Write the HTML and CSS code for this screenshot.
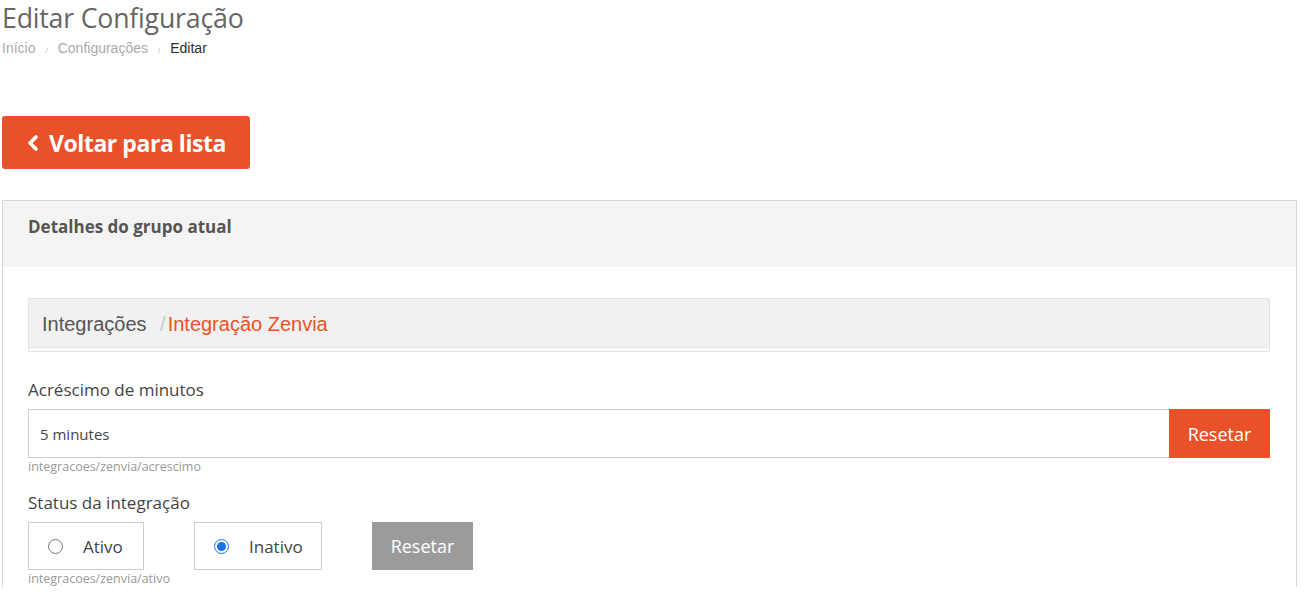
FILE: index.html
```html
<!DOCTYPE html>
<html lang="pt-BR">
<head>
<meta charset="utf-8">
<title>Editar Configuração</title>
<link rel="stylesheet" href="styles.css">
</head>
<body>
<div class="page">
  <h1 class="title">Editar Configuração</h1>
  <ol class="crumbs">
    <li><a href="#">Início</a></li>
    <li class="sep">/</li>
    <li><a href="#">Configurações</a></li>
    <li class="sep">/</li>
    <li class="current">Editar</li>
  </ol>

  <a class="btn-back" href="#">
    <svg class="chev" width="14" height="18" viewBox="0 0 14 18"><polyline points="10,3 4,9 10,15" fill="none" stroke="#fff" stroke-width="3.6" stroke-linecap="round" stroke-linejoin="round"/></svg>
    <span>Voltar para lista</span>
  </a>

  <section class="panel">
    <header class="panel-head">Detalhes do grupo atual</header>
    <div class="panel-body">
      <div class="group-crumb">
        <span class="gc-root">Integrações</span>
        <span class="gc-sep">/</span><span class="gc-active">Integração Zenvia</span>
      </div>

      <div class="field">
        <label class="label">Acréscimo de minutos</label>
        <div class="input-row">
          <input class="text-input" type="text" value="5 minutes">
          <button class="btn-reset">Resetar</button>
        </div>
        <div class="help">integracoes/zenvia/acrescimo</div>
      </div>

      <div class="field">
        <label class="label">Status da integração</label>
        <div class="radio-row">
          <label class="radio-box"><input type="radio" name="ativo"><span>Ativo</span></label>
          <label class="radio-box wide"><input type="radio" name="ativo" checked><span>Inativo</span></label>
          <button class="btn-reset gray">Resetar</button>
        </div>
        <div class="help">integracoes/zenvia/ativo</div>
      </div>
    </div>
  </section>
</div>
</body>
</html>
```

FILE: styles.css
```css
* { box-sizing: border-box; }
html, body { margin: 0; padding: 0; background: #fff; }
body { font-family: "Open Sans", "Noto Sans", sans-serif; color: #555; overflow: hidden; }

.page { padding: 0 13px 0 2px; }

.title {
  margin: 0;
  padding-top: 1px;
  font-weight: 400;
  font-size: 26.7px;
  line-height: 34px;
  color: #666;
  letter-spacing: -0.2px;
}

.crumbs {
  list-style: none;
  margin: 3px 0 0;
  padding: 0;
  display: flex;
  align-items: baseline;
  font-family: "Liberation Sans", Arial, sans-serif;
  font-size: 14px;
  line-height: 20px;
}
.crumbs a { color: #aaa; text-decoration: none; }
.crumbs .sep { color: #bbb; font-size: 8px; padding: 0 10px; }
.crumbs .current { color: #2b2b2b; }

.btn-back {
  display: inline-flex;
  align-items: center;
  gap: 9px;
  margin-top: 55px;
  height: 53px;
  width: 248px;
  padding-left: 24px;
  background: #e95228;
  border-radius: 3px;
  color: #fff;
  text-decoration: none;
  font-weight: 700;
  font-size: 23px;
  letter-spacing: -0.45px;
}
.chev { display: block; margin-top: 1px; }

.panel {
  margin-top: 31px;
  border: 1px solid #d6d6d6;
  border-bottom: 0;
}
.panel-head {
  background: #f4f4f4;
  height: 66px;
  padding: 15px 25px 0;
  font-weight: 700;
  font-size: 17px;
  line-height: 22px;
  color: #555;
}
.panel-body { padding: 31px 26px 0 25px; }

.group-crumb {
  background: #f1f1f1;
  border: 1px solid #e4e4e4;
  height: 54px;
  padding: 12px 13px 0;
  font-family: "Liberation Sans", Arial, sans-serif;
  font-size: 20px;
  line-height: 26px;
  box-shadow: inset 0 -3px 0 #fff, inset 0 -4px 0 #e4e4e4;
}
.gc-root { color: #555; }
.gc-sep { color: #c8c8c8; padding: 0 2px 0 8px; }
.gc-active { color: #e9532a; }

.field { margin-top: 27px; }
.field + .field { margin-top: 17px; }

.label {
  display: block;
  font-size: 17px;
  line-height: 21px;
  color: #444;
  margin-bottom: 9px;
}

.input-row { display: flex; height: 49px; }
.text-input {
  flex: 1;
  border: 1px solid #ccc;
  border-right: 0;
  padding: 0 11px;
  font-family: "Open Sans", "Noto Sans", sans-serif;
  font-size: 15px;
  color: #444;
  outline: none;
  background: #fff;
}

.btn-reset {
  width: 101px;
  border: 0;
  background: #e95228;
  color: #fff;
  font-family: "Open Sans", "Noto Sans", sans-serif;
  font-size: 18px;
  padding: 0;
  cursor: pointer;
}
.btn-reset.gray { background: #9b9b9b; height: 48px; margin-left: 50px; }

.help {
  font-size: 12.5px;
  line-height: 16px;
  color: #999;
  margin-top: 1px;
}

.radio-row { display: flex; align-items: flex-start; }
.radio-box {
  display: flex;
  align-items: center;
  height: 48px;
  width: 116px;
  border: 1px solid #ccc;
  padding-left: 19px;
  font-size: 17px;
  color: #444;
  margin-right: 50px;
}
.radio-box.wide { width: 128px; margin-right: 0; }
.radio-box input {
  margin: 0 20px 0 0;
  width: 15px;
  height: 15px;
  accent-color: #1a73e8;
}
```
